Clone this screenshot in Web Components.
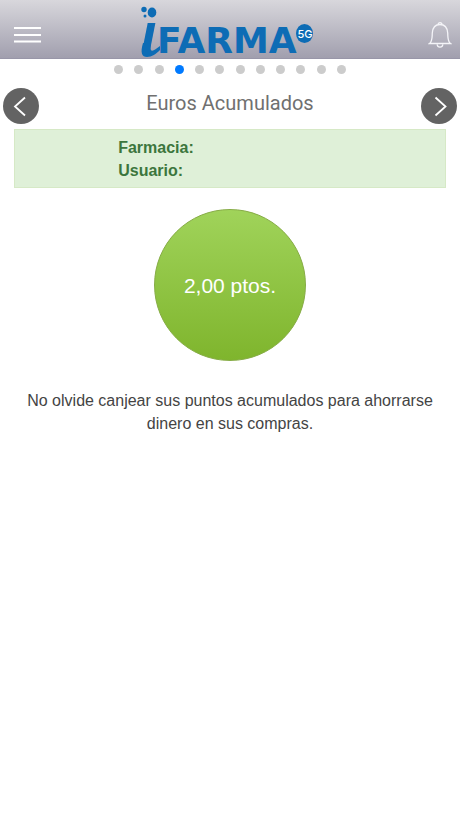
<!DOCTYPE html>
<html lang="es">
<head>
<meta charset="utf-8">
<meta name="viewport" content="width=device-width, initial-scale=1">
<title>iFarma 5G</title>
<style>
	body{margin:0;background:#fff;color:#444;font-family:"Liberation Sans",Arial,sans-serif;font-size:16px;line-height:23px}
</style>
</head>
<body>

<template id="app-header"><style>
	:host{display:block;background:linear-gradient(#d8d7dc,#a19fae);border-bottom:1px solid #9896a8}
	header{display:grid;grid-template-columns:1fr auto 1fr;align-items:end;height:58px;padding:0 8px}
	button{display:flex;padding:0;margin:0 0 8px;border:0;background:none;cursor:pointer}
	button:first-child{justify-self:start}
	button:last-child{justify-self:end}
	svg{display:block}
</style>
<header>
	<button aria-label="Menú"><svg width="34" height="30" viewBox="0 0 34 30" stroke="#fff" stroke-width="2"><path d="M6 8H33M6 15H33M6 21.500H33"/></svg></button>
	<slot></slot>
	<button aria-label="Notificaciones"><svg width="24" height="30" viewBox="0 0 24 30" fill="none" stroke="#f4f4f8" stroke-width="1.3"><path d="M1.500 23.500H22.500C19.500 21.500 20 18.500 19.700 13C19.300 7.500 16.500 4.500 12 4.500C7.500 4.500 4.700 7.500 4.300 13C4 18.500 4.500 21.500 1.500 23.500ZM10 4.800C10 2 14 2 14 4.800M9.200 24.500C9.500 28 14.500 28 14.800 24.500"/></svg></button>
</header></template>

<template id="app-logo"><style>
	:host{display:block}
	svg{display:block;overflow:visible}
	text{fill:#0d6cb5;font-weight:700}
	.i{font:italic 700 56px "Liberation Sans",sans-serif}
	.name{font-family:"DejaVu Sans",sans-serif;font-size:36px}
	.mark{fill:#fff;font-family:Inter,sans-serif;font-size:11px;font-weight:500}
</style>
<svg width="184" height="58" viewBox="0 0 184 58" fill="#0d6cb5">
	<ellipse cx="14" cy="12.500" rx="4.300" ry="5"/>
	<circle cx="6" cy="9.500" r="2.700"/>
	<circle cx="7" cy="16" r="1.500"/>
	<text class="i" x="3" y="52">ı</text>
	<path d="M5 43C2 53 4 57 9 57C14 57 18 54 22 50V46C18 49 15 51.500 13.500 50.500C12 49.500 12.500 46 13 43Z"/>
	<text class="name" x="19" y="53">FARMA</text>
	<ellipse cx="166.500" cy="33.500" rx="8.500" ry="9.500"/>
	<text class="mark" x="167" y="38" text-anchor="middle">5G</text>
</svg></template>

<template id="page-dots"><style>
	:host{display:block}
	nav{display:flex;justify-content:space-between;max-width:232px;margin:0 auto;padding:6px 0}
	button{width:9px;height:9px;padding:0;border:0;border-radius:50%;background:#ccc;cursor:pointer}
	button[aria-current]{background:#007aff}
</style><nav aria-label="Páginas"></nav></template>

<template id="page-title"><style>
	:host{display:flex;align-items:center;justify-content:space-between;padding:8px 3px 5px}
	h1{margin:0 0 6px;color:#707070;font:400 20px/24px Roboto,sans-serif}
	button{display:flex;align-items:center;justify-content:center;width:36px;height:36px;padding:0;border:0;border-radius:50%;background:#636363;cursor:pointer}
	svg{fill:none;stroke:#fff;stroke-width:1.8}
</style>
<button aria-label="Anterior"><svg width="36" height="36" viewBox="0 0 36 36"><path d="M22 9.500L12 18.500L22 27.500"/></svg></button>
<h1><slot></slot></h1>
<button aria-label="Siguiente"><svg width="36" height="36" viewBox="0 0 36 36"><path d="M14.500 9.500L24.500 18.500L14.500 27.500"/></svg></button></template>

<template id="user-info"><style>
	:host{display:block;margin:0 14px;border:1px solid #d6e9c6;background:#dff0d8;color:#3c763d;font-weight:700}
	div{padding:6px 0 5px 24%}
	::slotted(p){margin:0}
</style><div><slot></slot></div></template>

<template id="points-badge"><style>
	:host{display:flex;align-items:center;justify-content:center;box-sizing:border-box;width:152px;height:152px;margin:21px auto 28px;border:1px solid #86ac45;border-radius:50%;background:linear-gradient(#a0d35a,#7fb52d);color:#fff;font-size:21px}
</style><slot></slot></template>

<template id="page-note"><style>
	:host{display:block;padding:0 24px;text-align:center}
	p{margin:0}
</style><p><slot></slot></p></template>

<app-header><app-logo></app-logo></app-header>
<main>
	<page-dots count="12" current="4"></page-dots>
	<page-title>Euros Acumulados</page-title>
	<user-info><p>Farmacia:</p><p>Usuario:</p></user-info>
	<points-badge>2,00 ptos.</points-badge>
	<page-note>No olvide canjear sus puntos acumulados para ahorrarse dinero en sus compras.</page-note>
</main>

<script>
class Base extends HTMLElement {
	constructor() {
		super();
		this.attachShadow({mode: 'open'}).appendChild(document.querySelector('template#' + this.localName).content.cloneNode(true));
		this.$ = q => this.shadowRoot.querySelector(q);
	}
}

['app-header', 'app-logo', 'page-title', 'user-info', 'points-badge', 'page-note'].forEach(name => {
	window.customElements.define(name, class extends Base {});
});

window.customElements.define('page-dots', class extends Base {
	connectedCallback(){
		const count = Number(this.getAttribute('count'));
		for(let i = 1; i <= count; i++){
			const dot = document.createElement('button');
			dot.setAttribute('aria-label', 'Página ' + i);
			dot.addEventListener('click', () => this.setAttribute('current', i));
			this.$('nav').appendChild(dot);
		}
		this.mark();
	}
	static get observedAttributes() {
		return ['current'];
	}
	attributeChangedCallback(){
		this.mark();
	}
	mark(){
		const current = Number(this.getAttribute('current'));
		this.shadowRoot.querySelectorAll('button').forEach((dot, i) => {
			if(i + 1 == current) dot.setAttribute('aria-current', 'page');
			else dot.removeAttribute('aria-current');
		});
	}
});
</script>
</body>
</html>
